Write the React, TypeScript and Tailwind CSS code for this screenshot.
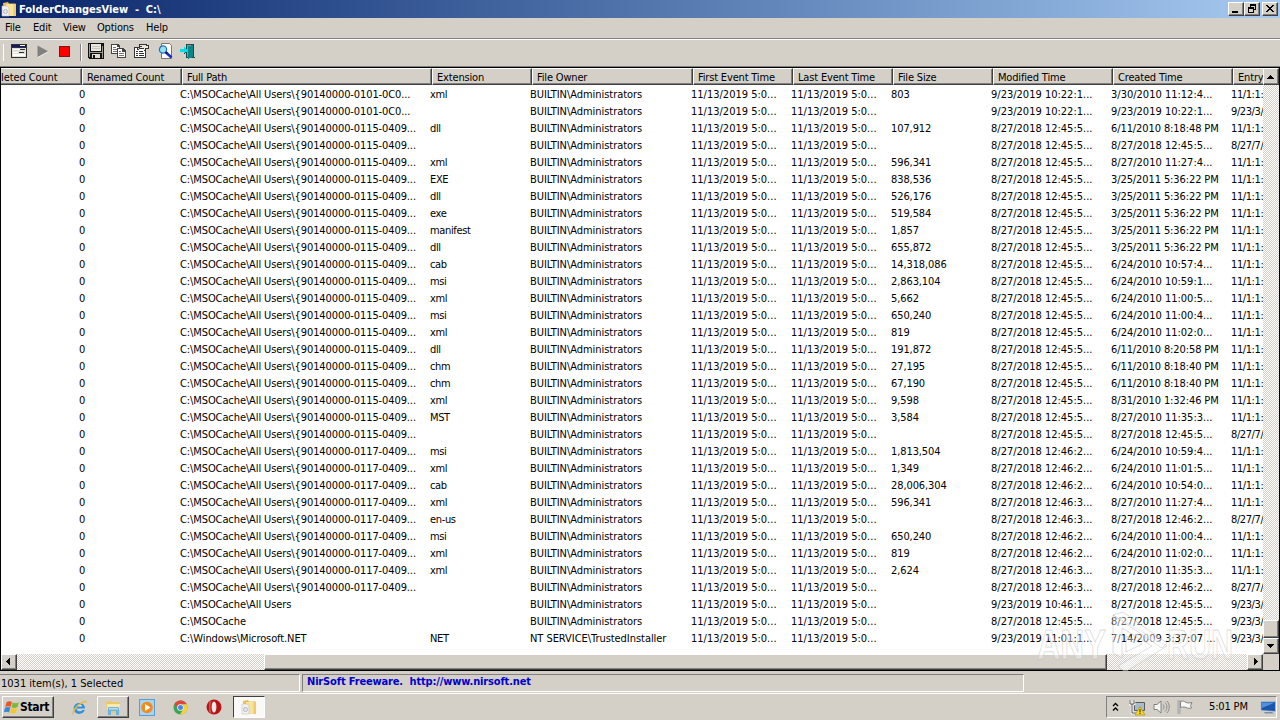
import type { ReactNode } from "react";
import clsx from "clsx";

type Row = [
  path: string,
  ext: string,
  size: string,
  modified: string,
  created: string,
  entry: string
];

const P0101 = "C:\\MSOCache\\All Users\\{90140000-0101-0C0...";
const P0115 = "C:\\MSOCache\\All Users\\{90140000-0115-0409...";
const P0117 = "C:\\MSOCache\\All Users\\{90140000-0117-0409...";
const M45 = "8/27/2018 12:45:5...";
const M462 = "8/27/2018 12:46:2...";
const M463 = "8/27/2018 12:46:3...";

// Entry column is garbled by the repaint next to the scroll bar
const E11 = "11/1:1:";
const E9 = "9/23/3/";
const E8 = "8/27/7/";

const rows: Row[] = [
  [P0101, "xml", "803", "9/23/2019 10:22:1...", "3/30/2010 11:12:4...", E11],
  [P0101, "", "", "9/23/2019 10:22:1...", "9/23/2019 10:22:1...", E9],
  [P0115, "dll", "107,912", M45, "6/11/2010 8:18:48 PM", E11],
  [P0115, "", "", M45, M45, E8],
  [P0115, "xml", "596,341", M45, "8/27/2010 11:27:4...", E11],
  [P0115, "EXE", "838,536", M45, "3/25/2011 5:36:22 PM", E11],
  [P0115, "dll", "526,176", M45, "3/25/2011 5:36:22 PM", E11],
  [P0115, "exe", "519,584", M45, "3/25/2011 5:36:22 PM", E11],
  [P0115, "manifest", "1,857", M45, "3/25/2011 5:36:22 PM", E11],
  [P0115, "dll", "655,872", M45, "3/25/2011 5:36:22 PM", E11],
  [P0115, "cab", "14,318,086", M45, "6/24/2010 10:57:4...", E11],
  [P0115, "msi", "2,863,104", M45, "6/24/2010 10:59:1...", E11],
  [P0115, "xml", "5,662", M45, "6/24/2010 11:00:5...", E11],
  [P0115, "msi", "650,240", M45, "6/24/2010 11:00:4...", E11],
  [P0115, "xml", "819", M45, "6/24/2010 11:02:0...", E11],
  [P0115, "dll", "191,872", M45, "6/11/2010 8:20:58 PM", E11],
  [P0115, "chm", "27,195", M45, "6/11/2010 8:18:40 PM", E11],
  [P0115, "chm", "67,190", M45, "6/11/2010 8:18:40 PM", E11],
  [P0115, "xml", "9,598", M45, "8/31/2010 1:32:46 PM", E11],
  [P0115, "MST", "3,584", M45, "8/27/2010 11:35:3...", E11],
  [P0115, "", "", M45, M45, E8],
  [P0117, "msi", "1,813,504", M462, "6/24/2010 10:59:4...", E11],
  [P0117, "xml", "1,349", M462, "6/24/2010 11:01:5...", E11],
  [P0117, "cab", "28,006,304", M462, "6/24/2010 10:54:0...", E11],
  [P0117, "xml", "596,341", M463, "8/27/2010 11:27:4...", E11],
  [P0117, "en-us", "", M463, M462, E8],
  [P0117, "msi", "650,240", M462, "6/24/2010 11:00:4...", E11],
  [P0117, "xml", "819", M462, "6/24/2010 11:02:0...", E11],
  [P0117, "xml", "2,624", M463, "8/27/2010 11:35:3...", E11],
  [P0117, "", "", M463, M462, E8],
  ["C:\\MSOCache\\All Users", "", "", "9/23/2019 10:46:1...", M45, E9],
  ["C:\\MSOCache", "", "", M45, M45, E9],
  ["C:\\Windows\\Microsoft.NET", "NET", "", "9/23/2019 11:01:1...", "7/14/2009 3:37:07 ...", E9],
];

const headers = [
  { label: "Renamed Count", width: "w-[100px]" },
  { label: "Full Path", width: "w-[250px]" },
  { label: "Extension", width: "w-[100px]" },
  { label: "File Owner", width: "w-[161px]" },
  { label: "First Event Time", width: "w-[100px]" },
  { label: "Last Event Time", width: "w-[100px]" },
  { label: "File Size", width: "w-[100px]" },
  { label: "Modified Time", width: "w-[120px]" },
  { label: "Created Time", width: "w-[120px]" },
];

const raised =
  "bg-[#d4d0c8] border border-t-white border-l-white border-r-[#404040] border-b-[#404040] shadow-[inset_-1px_-1px_0_#808080]";
const sunken =
  "border border-t-[#808080] border-l-[#808080] border-r-white border-b-white";
const dither =
  "bg-[conic-gradient(#fff_25%,#d4d0c8_0_50%,#fff_0_75%,#d4d0c8_0)] bg-[length:2px_2px]";

function Btn({ className, children }: { className?: string; children?: ReactNode }) {
  return (
    <div className={clsx("flex shrink-0 items-center justify-center", raised, className)}>
      {children}
    </div>
  );
}

function Arrow({ d }: { d: string }) {
  return (
    <svg width="8" height="8" viewBox="0 0 8 8" shapeRendering="crispEdges">
      <path d={d} fill="#000" />
    </svg>
  );
}

function FolderIcon() {
  return (
    <svg width="16" height="16" viewBox="0 0 16 16">
      <path d="M2 2 7 1l1 1.5h6.5V15H3z" fill="#e3bd55" />
      <path d="M5 3h10v12H4z" fill="#f9e29a" />
      <path d="M12.500 3H15v12h-2.500z" fill="#efcb6b" />
      <path d="M1 5h5l2 2v8H1z" fill="#f1f1f4" stroke="#c6c2b6" strokeWidth=".6" />
      <circle cx="4.500" cy="10.500" r="2" fill="#e4e7ee" stroke="#b3b8c6" />
    </svg>
  );
}

function TitleBar() {
  return (
    <div className="flex h-[18px] items-center bg-linear-to-r from-[#0a246a] to-[#a6caf0] pr-[2px] pl-[1px]">
      <FolderIcon />
      <span className="mt-[2px] ml-[2px] text-[11px] font-bold tracking-[-0.03px] whitespace-pre text-white">
        {"FolderChangesView  -  C:\\"}
      </span>
      <div className="ml-auto flex">
        <Btn className="h-[14px] w-4">
          <svg width="12" height="10" viewBox="0 0 12 10" shapeRendering="crispEdges">
            <path d="M2 7h6v2H2z" />
          </svg>
        </Btn>
        <Btn className="h-[14px] w-4">
          <svg width="12" height="10" viewBox="0 0 12 10" shapeRendering="crispEdges">
            <path d="M4 0h6v6H8V5h1V2H5v1H4z" />
            <path d="M2 3h6v6H2zM3 5v3h4V5z" fillRule="evenodd" />
          </svg>
        </Btn>
        <Btn className="ml-[2px] h-[14px] w-4">
          <svg width="12" height="10" viewBox="0 0 12 10" shapeRendering="crispEdges">
            <path d="M2 1h2v1h1v1h2V2h1V1h2v1H9v1H8v1H7v1h1v1h1v1h1v1H8V7H7V6H5v1H4v1H2V7h1V6h1V5h1V4H4V3H3V2H2z" />
          </svg>
        </Btn>
      </div>
    </div>
  );
}

function MenuBar() {
  return (
    <div className="flex h-[21px] items-center border-b border-[#808080] pt-px pl-[5px] tracking-[-0.2px]">
      <span className="w-7">File</span>
      <span className="w-[30px]">Edit</span>
      <span className="w-[34px]">View</span>
      <span className="w-[49px]">Options</span>
      <span>Help</span>
    </div>
  );
}

function Toolbar() {
  return (
    <div className="flex h-[27px] items-start border-t border-white pt-[3px] pl-[3px]">
      <div className="mt-px h-[17px] w-px bg-white" />
      <svg className="ml-[7px]" width="16" height="16" viewBox="0 0 16 16" shapeRendering="crispEdges">
        <path d="M0 1h16v14H0z" fill="#30302c" />
        <path d="M1 5h14v9H1z" fill="#e2dfd8" />
        <path d="M1 2h14v2H1z" fill="#15157c" />
        <path d="M9 2h5v1H9z" fill="#fff" />
        <path d="M2 6h12v1H2zM2 9h5v1H2zM2 11h12v2H2z" fill="#fff" />
        <path d="M9 6h5v1H9zM8 9h5v1H8z" fill="#30302c" />
      </svg>
      <svg className="ml-[10px]" width="12" height="16" viewBox="0 0 12 16">
        <path d="M.5 2.5v12L11.5 8.5z" fill="#808080" />
        <path d="M.5 14.5 11.5 8.5" stroke="#fff" strokeWidth=".8" />
      </svg>
      <svg className="ml-[10px]" width="12" height="16" viewBox="0 0 12 16" shapeRendering="crispEdges">
        <path d="M0 3h11v11H0z" fill="#7d1712" />
        <path d="M1 4h9v9H1z" fill="#fe0000" />
      </svg>
      <div className="mt-px ml-[9px] h-[17px] w-[2px] border-l border-[#808080] bg-white" />
      <svg className="ml-[6px]" width="16" height="16" viewBox="0 0 16 16" shapeRendering="crispEdges">
        <path d="M0 0h16v16H1l-1-1z" fill="#111" />
        <path d="M3 1h10v7H3z" fill="#e9e6df" />
        <path d="M1 1h1v13H1zM14 3h1v12h-1zM2 9h12v1H2z" fill="#9b988f" />
        <path d="M4 3h8v1H4zM4 5h8v1H4z" fill="#c9c6bd" />
        <path d="M4 11h8v4H4z" fill="#dedbd3" />
        <path d="M5 12h2v3H5z" fill="#111" />
      </svg>
      <svg className="ml-[7px]" width="16" height="16" viewBox="0 0 16 16" shapeRendering="crispEdges">
        <path d="M0 1h7l2 2v8H0z" fill="#444" />
        <path d="M1 2h5v2h2v6H1z" fill="#fff" />
        <path d="M2 4h3v1H2zM2 6h4v1H2zM2 8h4v1H2z" fill="#77756e" />
        <path d="M6 5h6l3 3v7H6z" fill="#444" />
        <path d="M7 6h4v3h3v5H7z" fill="#fff" />
        <path d="M8 8h2v1H8zM8 10h5v1H8zM8 12h5v1H8z" fill="#77756e" />
      </svg>
      <svg className="ml-[7px]" width="16" height="16" viewBox="0 0 16 16" shapeRendering="crispEdges">
        <path d="M0 4h12v11H0z" fill="#333" />
        <path d="M1 5h10v9H1z" fill="#fff" />
        <path d="M2 8h2v1H2zM5 8h4v1H5zM2 10h2v1H2zM5 10h5v1H5zM2 12h2v1H2zM5 12h5v1H5z" fill="#333" />
        <path d="M5 1h8v1h2v4h-3v2h-2V6H7L3 7V4h2z" fill="#333" />
        <path d="M6 2h6v1h2v2h-3v2h-1V5H6L4 6V5h2V4h2V3H6z" fill="#ebe8e0" />
      </svg>
      <svg className="ml-[8px]" width="16" height="16" viewBox="0 0 16 16">
        <path d="M3.500 .5h8l2 2v13h-10z" fill="#fff" stroke="#77756e" />
        <path d="M8 9.500l5.500 5" stroke="#1a2ac2" strokeWidth="2.600" />
        <circle cx="5" cy="6.500" r="3.600" fill="#8fe5f3" stroke="#2a6fc0" strokeWidth="1.300" />
        <path d="M7.500 9l1.500 1.500" stroke="#10106c" strokeWidth="2" />
      </svg>
      <svg className="ml-[6px]" width="16" height="16" viewBox="0 0 16 16" shapeRendering="crispEdges">
        <path d="M6 1h8v13h1v1H6z" fill="#1d4a4a" />
        <path d="M7 2h6v12H7z" fill="#8b9a98" />
        <path d="M8 3l5-1v12l-5 2z" fill="#0c8686" />
        <path d="M0 6h4V4h1v1h1v1h1v1h1v1H7v1H6v1H5v1H4V9H0z" fill="#05dce8" />
        <path d="M4 10h1v1H4zM5 9h1v1H5z" fill="#333" />
      </svg>
    </div>
  );
}

function HeaderCell({ label, width }: { label: string; width: string }) {
  return (
    <div
      className={clsx(
        "h-[17px] shrink-0 border border-t-white border-r-[#404040] border-b-[#404040] border-l-white pl-[4px] leading-[17px] tracking-[-0.17px] shadow-[inset_-1px_-1px_0_#808080]",
        width
      )}
    >
      {label}
    </div>
  );
}

function ListView() {
  return (
    <div className="flex h-[604px] flex-col border border-black bg-white">
      <div className="flex min-h-0 flex-1">
        <div className="w-[1262px] overflow-hidden">
          <div className="flex bg-[#d4d0c8]">
            <div className="h-[17px] w-[81px] shrink-0 border border-t-white border-r-[#404040] border-b-[#404040] border-l-0 leading-[17px] tracking-[-0.1px] whitespace-nowrap shadow-[inset_-1px_-1px_0_#808080]">
              leted Count
            </div>
            {headers.map((h) => (
              <HeaderCell key={h.label} label={h.label} width={h.width} />
            ))}
            <HeaderCell label="Entry" width="w-[60px]" />
          </div>
          <div className="flex flex-col whitespace-nowrap">
            {rows.map((r, i) => (
              <div key={i} className="flex h-[17px] leading-[19px]">
                <div className="w-[179px] shrink-0 pl-[78px]">0</div>
                <div className="w-[250px] shrink-0 tracking-[-0.1px]">{r[0]}</div>
                <div className="w-[100px] shrink-0 tracking-[-0.35px]">{r[1]}</div>
                <div className="w-[161px] shrink-0 tracking-[-0.05px]">
                  {i === rows.length - 1 ? "NT SERVICE\\TrustedInstaller" : "BUILTIN\\Administrators"}
                </div>
                <div className="w-[100px] shrink-0">11/13/2019 5:0...</div>
                <div className="w-[100px] shrink-0">11/13/2019 5:0...</div>
                <div className="w-[100px] shrink-0 tracking-[-0.1px]">{r[2]}</div>
                <div className="w-[120px] shrink-0">{r[3]}</div>
                <div
                  className={clsx(
                    "w-[120px] shrink-0",
                    r[4].endsWith("PM") && "tracking-[-0.1px]"
                  )}
                >
                  {r[4]}
                </div>
                <div className="w-8 shrink-0 tracking-[-0.4px]">{r[5]}</div>
              </div>
            ))}
          </div>
        </div>
        <div className={clsx("flex w-4 flex-col", dither)}>
          <Btn className="h-[17px] w-4">
            <Arrow d="M3 2h1v1h1v1h1v1h1v1H0V5h1V4h1V3h1z" />
          </Btn>
          <Btn className="mt-auto h-[18px] w-4" />
          <Btn className="h-4 w-4">
            <Arrow d="M0 2h7v1H6v1H5v1H4v1H3V5H2V4H1V3H0z" />
          </Btn>
        </div>
      </div>
      <div className="flex h-4">
        <div className={clsx("flex w-[1262px]", dither)}>
          <Btn className="h-4 w-4">
            <Arrow d="M4 0h1v7H4V6H3V5H2V4H1V3h1V2h1V1h1z" />
          </Btn>
          <Btn className="ml-[247px] h-4 w-[843px]" />
          <Btn className="ml-auto h-4 w-4">
            <Arrow d="M3 0h1v1h1v1h1v1h1v1H6v1H5v1H4v1H3z" />
          </Btn>
        </div>
        <div className="w-4 bg-[#d4d0c8]" />
      </div>
    </div>
  );
}

function Watermark() {
  return (
    <svg className="absolute top-[606px] left-[1030px]" width="210" height="72" viewBox="0 0 210 72">
      <g
        fill="#fff"
        fillOpacity=".4"
        stroke="#bbb"
        strokeOpacity=".5"
        strokeWidth="1"
        fontFamily="Liberation Sans"
        fontWeight="bold"
        fontSize="43"
      >
        <text x="7" y="53" textLength="69" lengthAdjust="spacingAndGlyphs">ANY</text>
        <text x="137" y="53" textLength="66" lengthAdjust="spacingAndGlyphs">RUN</text>
        <path d="M83 9v38l9 5V22l30 18-34 20 7 6 42-26z" />
        <path d="M83 9l10-3 44 31-5 5zM96 30v16l16-8z" />
      </g>
    </svg>
  );
}

function StatusBar() {
  return (
    <div className="flex h-[22px] gap-[2px] pt-[3px] pb-px">
      <div className={clsx("h-[18px] w-[300px] pl-px leading-[17px]", sunken, "border-l-0")}>
        1031 item(s), 1 Selected
      </div>
      <div
        className={clsx(
          "h-[18px] w-[722px] pl-1 leading-[14px] font-bold tracking-[-0.15px] whitespace-pre text-[#0000d0]",
          sunken
        )}
      >
        {"NirSoft Freeware.  http://www.nirsoft.net"}
      </div>
    </div>
  );
}

function Taskbar() {
  return (
    <div className="flex h-[27px] items-start border-t border-white pt-[2px] pr-[3px] pl-[2px]">
      <Btn className="h-[22px] w-[52px] !justify-start pl-px">
        <svg width="16" height="16" viewBox="0 0 16 16">
          <path d="M2.500 3.200C4.500 1.800 6.500 2 8 3L6.600 7.800C5 7 3 6.800 1.200 8z" fill="#e8562a" />
          <path d="M8.800 3.400c2 1 4 1 6.200-.2l-1.500 4.800c-2 1.100-4 1.200-6.100.2z" fill="#7cb83a" />
          <path d="M1 8.800C3 7.700 5 7.800 6.400 8.600L5 13.400C3.200 12.500 1.500 12.500-.3 13.500z" fill="#3a86d8" />
          <path d="M7.200 9c2 1 4.100 1 6.100 0l-1.500 4.800c-2 1-4 1-6 0z" fill="#f7c52c" />
        </svg>
        <span className="text-[12px] font-bold tracking-[-0.3px]">Start</span>
      </Btn>
      <svg className="mt-[3px] ml-[17px]" width="17" height="17" viewBox="0 0 17 17">
        <path d="M14 9.500H5.500c.2 3.300 5 3.600 5.900 1.600h2.400C11.500 17 2.500 16 2.700 9 3 2.300 14 2 14 9.500z" fill="#2f8fdf" />
        <path d="M5.500 7.500h5.600C10.800 4.900 6 4.900 5.500 7.500z" fill="#d4ecfa" />
        <path d="M2.500 15.800C-1 15 4 6 12 2.300c3.500-1.500 4.300.2 3 2.700.3-2-1-2.300-3-1.300C7 6.500 2.500 12 2.500 15.800z" fill="#e8b83a" />
      </svg>
      <Btn className="ml-[9px] h-[22px] w-8">
        <svg width="17" height="17" viewBox="0 0 17 17">
          <path d="M1 3l5-1 1 1h8v11H2z" fill="#ecc967" />
          <path d="M2 5h13l-.5 6h-12z" fill="#fae9a8" />
          <path d="M3 9.500c0-1 .5-1.500 1.500-1.500h8c1 0 1.500.5 1.500 1.500V16h-3v-4H6v4H3z" fill="#6cb5e3" />
          <path d="M4 9h9v1.500H4z" fill="#b9def4" />
        </svg>
      </Btn>
      <svg className="mt-[3px] ml-[10px]" width="17" height="17" viewBox="0 0 17 17">
        <rect x=".5" y=".5" width="15" height="16" fill="#a8d4f2" stroke="#579fd3" />
        <circle cx="8" cy="8.500" r="5.800" fill="#f28a1c" />
        <path d="M6 5l5.500 3.500L6 12z" fill="#fff" />
      </svg>
      <svg className="mt-[4px] ml-[17px]" width="15" height="15" viewBox="0 0 16 16">
        <circle cx="8" cy="8" r="7.500" fill="#3ba755" />
        <path d="M1.500 4.200A7.500 7.500 0 0 1 14.700 4.600H8A3.400 3.400 0 0 0 4.900 9.200z" fill="#e2453a" />
        <path d="M14.800 4.600A7.500 7.500 0 0 1 7.500 15.500L11 9.600A3.400 3.400 0 0 0 9.500 4.600z" fill="#f9cf3a" />
        <circle cx="8" cy="8" r="3.500" fill="#fff" />
        <circle cx="8" cy="8" r="2.700" fill="#4a86e2" />
      </svg>
      <svg className="mt-[3px] ml-[18px]" width="16" height="16" viewBox="0 0 16 16">
        <circle cx="8" cy="8" r="7.500" fill="#b81418" />
        <ellipse cx="8" cy="8" rx="2.400" ry="5.500" fill="#f4e9e6" />
        <path d="M3 3.500a7 7 0 0 1 3-2C4 5 4 11 6 14.500a7 7 0 0 1-3-2z" fill="#dc4a44" />
      </svg>
      <div className="ml-[11px] flex h-[22px] w-8 items-center justify-center border border-t-[#404040] border-r-white border-b-white border-l-[#404040] bg-[#faf9f7]">
        <FolderIcon />
      </div>
      <div className={clsx("ml-auto flex h-[22px] w-[171px] items-center", sunken)}>
        <svg className="ml-[5px] shrink-0" width="8" height="12" viewBox="0 0 8 12">
          <path d="M1 5l2.500-2.500L6 5M1 9.500 3.500 7 6 9.500" fill="none" stroke="#000" strokeWidth="1.300" />
        </svg>
        <svg className="ml-[9px] shrink-0" width="17" height="17" viewBox="0 0 17 17">
          <path d="M5.500 3.500h10v8h-10z" fill="#a5bdc9" stroke="#5b5b5b" />
          <path d="M1 1v4h4V1M3 5v9h5" fill="none" stroke="#fff" strokeWidth="2.500" />
          <path d="M1 1v4h4V1M3 5v9h4" fill="none" stroke="#555" strokeWidth="1" />
          <path d="M11 7.500l5 8.500H6z" fill="#f9d816" stroke="#a08310" strokeWidth=".6" />
          <path d="M10.500 10h1v3.500h-1zM10.500 14h1v1h-1z" fill="#222" />
        </svg>
        <svg className="ml-[7px] shrink-0" width="17" height="16" viewBox="0 0 17 16">
          <path d="M1 5.500h3L8 2v12L4 10.500H1z" fill="#f5f4f1" stroke="#777" strokeWidth=".9" />
          <path d="M10 5.500c1.300 1.500 1.300 3.500 0 5M12 3.500c2.500 2.500 2.500 6.500 0 9M14 2c3 3.500 3 8.500 0 12" fill="none" stroke="#858585" strokeWidth=".9" />
        </svg>
        <svg className="ml-[7px] shrink-0" width="17" height="16" viewBox="0 0 17 16">
          <path d="M2 1v14" stroke="#666" strokeWidth="2.400" />
          <path d="M2 1v14" stroke="#fff" strokeWidth="1" />
          <path d="M3.500 2.500c3-1 4 0 5 .7C10 4 12 4.300 15 3.500l-1.500 3.200 1 2.300c-2 .7-4 .2-5.500-.5-1.500-.7-3-.8-5.500 0z" fill="#f8f8f6" stroke="#777" strokeWidth=".9" />
        </svg>
        <span className="ml-[15px] w-10 shrink-0 tracking-[-0.15px] whitespace-nowrap">5:01 PM</span>
        <svg className="ml-[11px] shrink-0" width="17" height="16" viewBox="0 0 17 16">
          <path d="M1 2.500h14.500v10L1 11.500z" fill="#1c55ad" stroke="#b5c8dd" strokeWidth=".7" />
          <path d="M2 3.500h13L2 9z" fill="#5591d9" />
          <path d="M4 13h8l2 1.500H5z" fill="#7990a8" />
        </svg>
      </div>
    </div>
  );
}

export default function App() {
  return (
    <div className="relative flex h-[720px] w-[1280px] flex-col overflow-hidden bg-[#d4d0c8] font-['DejaVu_Sans_Condensed','DejaVu_Sans',sans-serif] text-[11px] text-black">
      <TitleBar />
      <MenuBar />
      <Toolbar />
      <div className="h-px bg-[#808080]" />
      <ListView />
      <StatusBar />
      <Taskbar />
      <Watermark />
    </div>
  );
}
